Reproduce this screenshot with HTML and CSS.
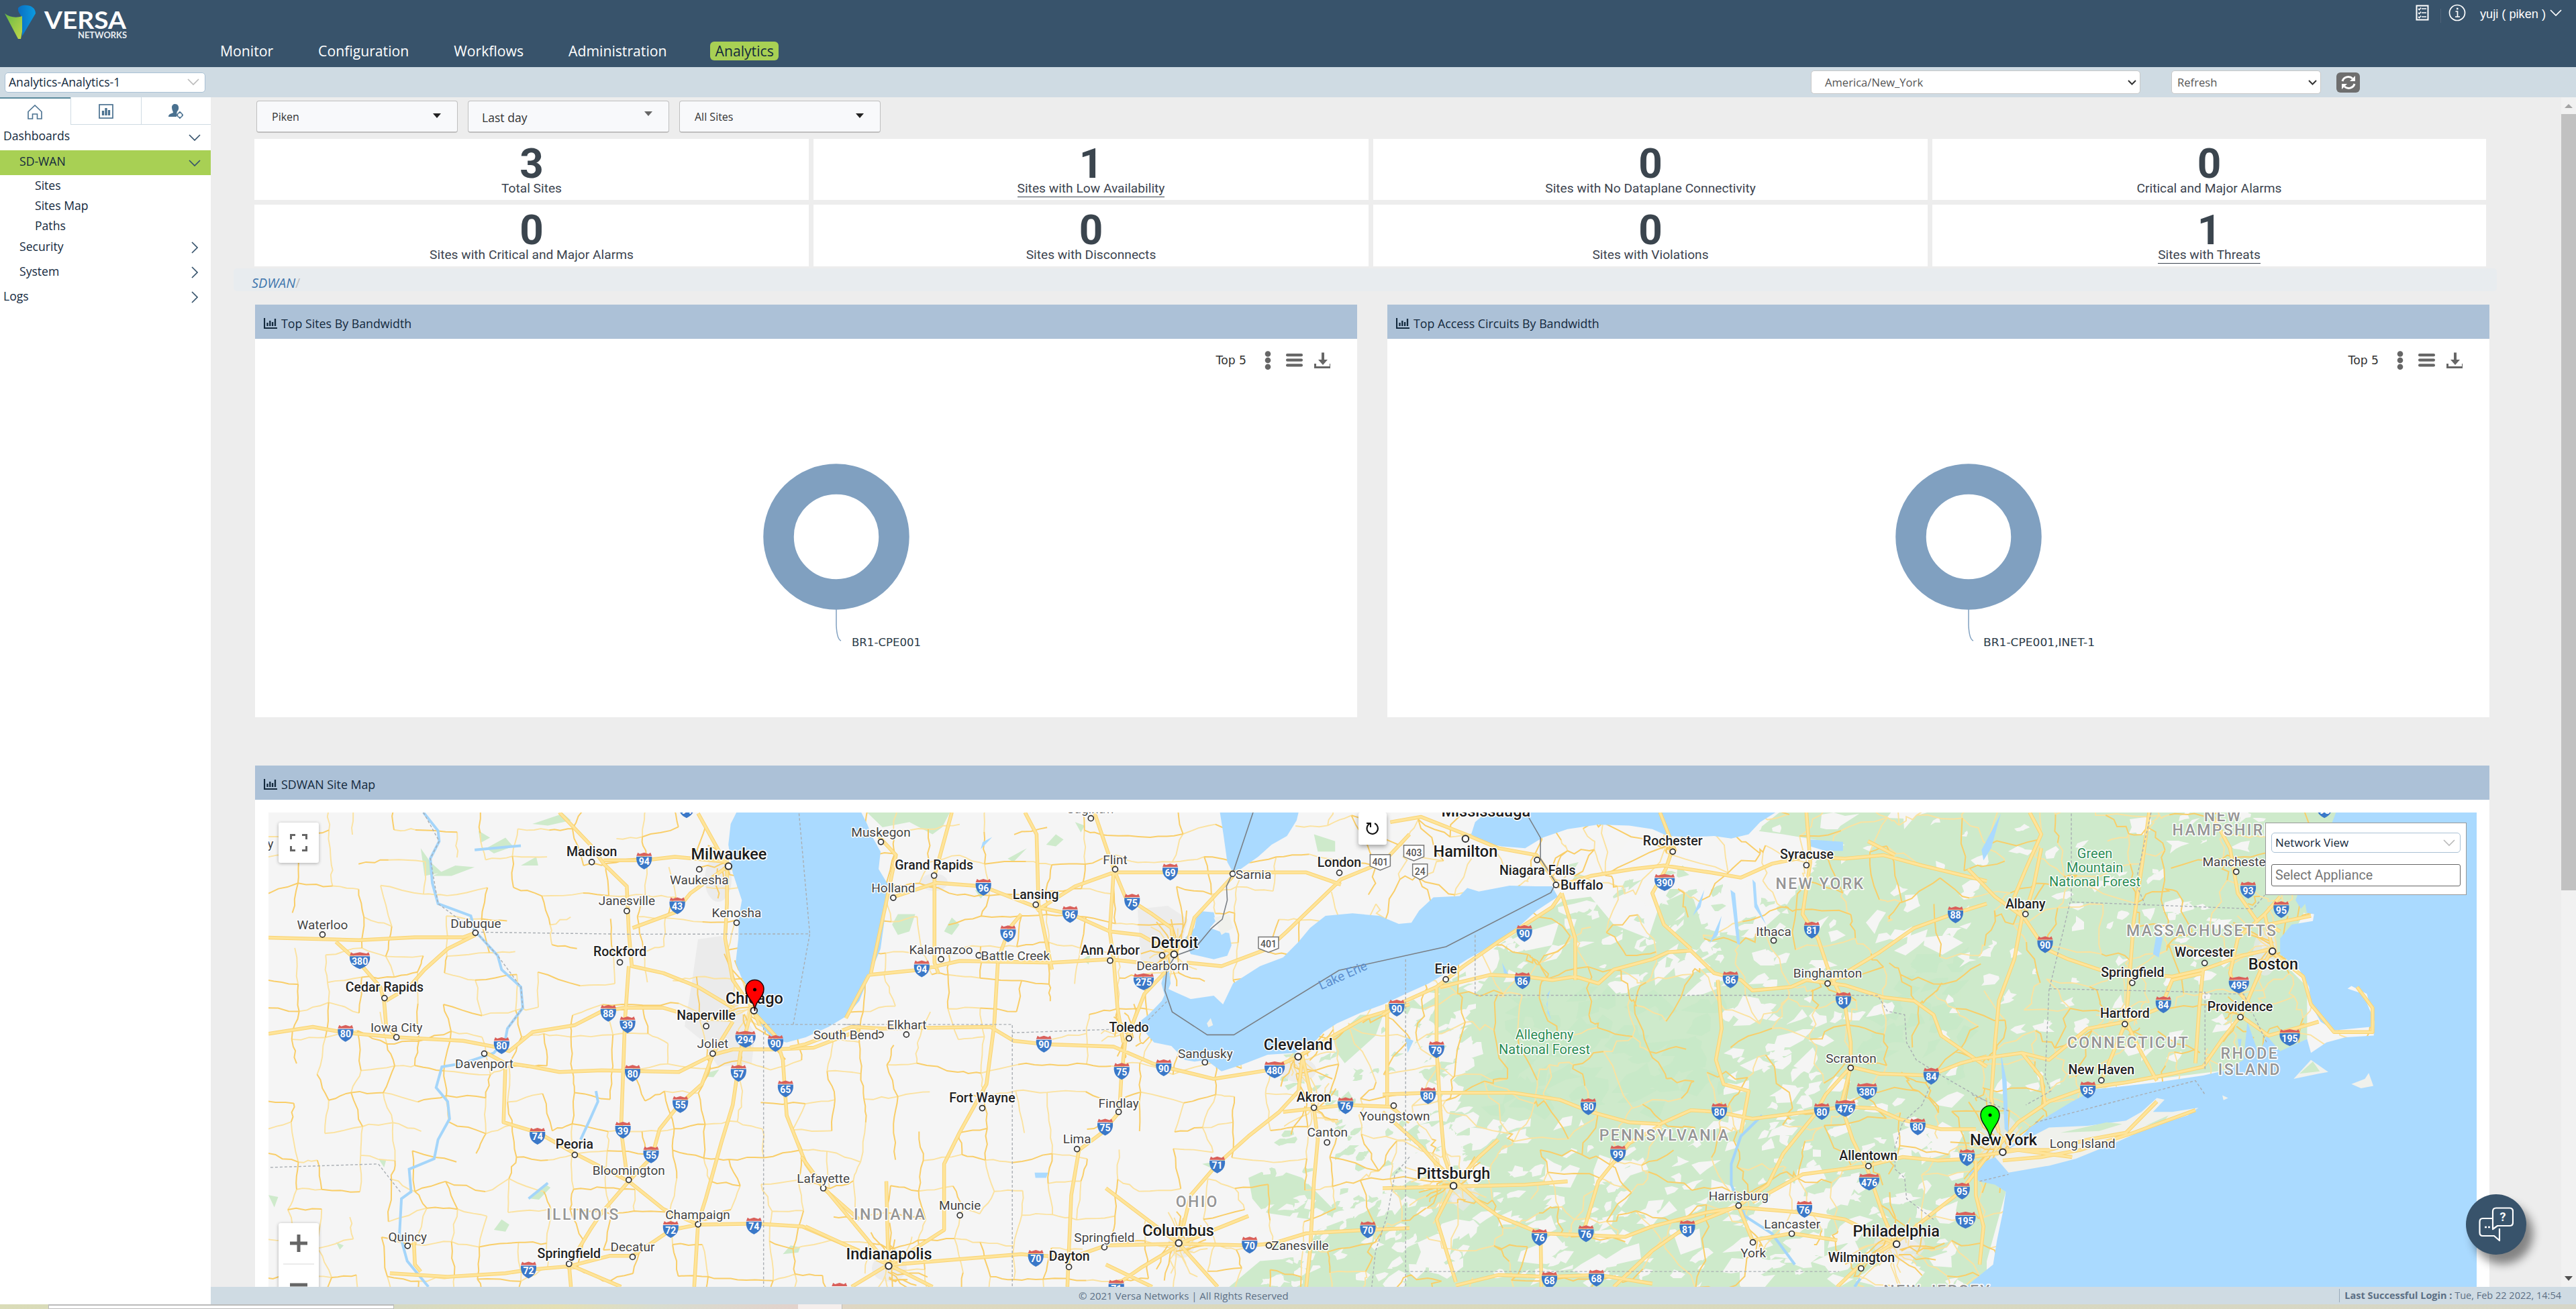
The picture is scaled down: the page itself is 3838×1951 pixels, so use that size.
FILE: index.html
```html
<!DOCTYPE html>
<html lang="en">
<head>
<meta charset="utf-8">
<title>Versa Analytics</title>
<link rel="stylesheet" href="styles.css">
</head>
<body>
<svg width="0" height="0" class="defs">
  <symbol id="chev" viewBox="0 0 18 10"><path d="M1 1 L9 9 L17 1" fill="none" stroke="currentColor" stroke-width="1.7"/></symbol>
  <symbol id="tri" viewBox="0 0 12 7"><path d="M0 0H12L6 7Z" fill="currentColor"/></symbol>
  <symbol id="bars" viewBox="0 0 20 16"><path d="M1 0V15H20" fill="none" stroke="currentColor" stroke-width="2.2"/><path d="M5.5 7V12M9.3 4V12M13.1 6V12M17 1V12" stroke="currentColor" stroke-width="2.3"/></symbol>
  <symbol id="tools" viewBox="0 0 98 28">
    <g fill="#666"><circle cx="5" cy="4.5" r="4.3"/><circle cx="5" cy="14" r="4.3"/><circle cx="5" cy="23.8" r="4.3"/>
    <rect x="32" y="4" width="25" height="4.2" rx="2"/><rect x="32" y="11.6" width="25" height="4.2" rx="2"/><rect x="32" y="19.2" width="25" height="4.2" rx="2"/>
    <path d="M85 2.5h4V13h5l-7 8-7-8h5zM74 19h3v4h20v-4h3v7H74z"/></g>
  </symbol>
</svg>
<header class="top">
  <svg class="logo" viewBox="0 0 190 52">
    <defs><linearGradient id="lg" x1="0" y1="0" x2="1" y2="1"><stop offset="0" stop-color="#66b845"/><stop offset="1" stop-color="#c0d84a"/></linearGradient>
    <linearGradient id="lb" x1="0" y1="0" x2="1" y2="0"><stop offset="0" stop-color="#0a6fc2"/><stop offset="1" stop-color="#0b9be0"/></linearGradient></defs>
    <path d="M27 5C32-2 53-1 53 13L33 47V24C33 14 26 13 27 5Z" fill="url(#lb)"/>
    <path d="M7 13C14 19 25 20 33 17V40L31 51H27Z" fill="url(#lg)"/>
    <text x="66" y="36" class="lg1" textLength="122" lengthAdjust="spacingAndGlyphs">VERSA</text>
    <text x="116" y="49.5" class="lg2" textLength="73" lengthAdjust="spacingAndGlyphs">NETWORKS</text>
  </svg>
  <nav class="nav"><a>Monitor</a><a>Configuration</a><a>Workflows</a><a>Administration</a><a class="on">Analytics</a></nav>
  <div class="user">
    <svg width="20" height="24" viewBox="0 0 20 24"><rect x="1.5" y="1.5" width="17" height="21" fill="none" stroke="#fff" stroke-width="2"/><path d="M9 6h7M9 12h7M9 18h7M4 6l1.5 1.5L8 4.5M4 12l1.5 1.5L8 10.500M4 18l1.5 1.500L8 16.500" fill="none" stroke="#fff" stroke-width="1.6"/></svg>
    <i class="sep"></i>
    <svg width="26" height="26" viewBox="0 0 26 26" fill="none" stroke="#fff" stroke-width="1.7"><circle cx="13" cy="13" r="11.500"/><path d="M10.500 11h3v8M10 19h7"/><path d="M12 7h2.500" stroke-width="2.500"/></svg>
    <span>yuji ( piken )</span><svg width="18" height="10"><use href="#chev"/></svg>
  </div>
</header>
<div class="sub">
  <div class="sel node"><span>Analytics-Analytics-1</span><svg width="18" height="10"><use href="#chev"/></svg></div>
  <div class="sel tz"><span>America/New_York</span><svg width="13" height="8" viewBox="0 0 13 8"><path d="M1 1l5.500 5.500L12 1" fill="none" stroke="#333" stroke-width="2"/></svg></div>
  <div class="sel rf"><span>Refresh</span><svg width="13" height="8" viewBox="0 0 13 8"><path d="M1 1l5.500 5.500L12 1" fill="none" stroke="#333" stroke-width="2"/></svg></div>
  <div class="reload"><svg width="22" height="22" viewBox="0 0 22 22"><path d="M2 9A9 8.500 0 0 1 17 5M20 13A9 8.500 0 0 1 5 17" fill="none" stroke="#fff" stroke-width="3"/><path d="M21 1V9H13ZM1 21V13H9Z" fill="#fff"/></svg></div>
</div>
<div class="work">
  <aside>
    <div class="tabs">
      <div class="tab on"><svg width="22" height="22" viewBox="0 0 22 22" fill="none" stroke="#4a7190" stroke-width="1.600"><path d="M1 10.500L11 1 21 10.500V21H14.500V14H7.500V21H1Z"/></svg></div>
      <div class="tab"><svg width="22" height="22" viewBox="0 0 22 22" stroke="#4a7190" fill="none"><rect x="1" y="1" width="20" height="20" stroke-width="1.700"/><path d="M6.500 10v7M11 6v11M15.500 9v8" stroke-width="3.300"/></svg></div>
      <div class="tab"><svg width="22" height="22" viewBox="0 0 22 22"><path d="M10 0C16 0 16.500 8 13 11C12 13 13 13.500 12 19H0C0 15 4 14.500 7 13C7 11 5 9 5 5C5 2 7 0 10 0Z" fill="#4a7190"/><circle cx="17" cy="16.500" r="3.600" fill="#fff" stroke="#4a7190" stroke-width="1.600"/><path d="M17 11v2M17 20v2M11.500 16.500h2M20.500 16.500h2" stroke="#4a7190" stroke-width="1.800"/></svg></div>
    </div>
    <div class="row r0"><span>Dashboards</span><svg width="18" height="10"><use href="#chev"/></svg></div>
    <div class="row r1 on"><span>SD-WAN</span><svg width="18" height="10"><use href="#chev"/></svg></div>
    <div class="row r2">Sites</div><div class="row r2">Sites Map</div><div class="row r2">Paths</div>
    <div class="row r1"><span>Security</span><svg class="rt" width="18" height="10"><use href="#chev"/></svg></div>
    <div class="row r1"><span>System</span><svg class="rt" width="18" height="10"><use href="#chev"/></svg></div>
    <div class="row r0"><span>Logs</span><svg class="rt" width="18" height="10"><use href="#chev"/></svg></div>
  </aside>
  <div class="right">
    <div class="view">
      <main>
        <div class="filters">
          <div class="f"><span>Piken</span><svg width="12" height="7"><use href="#tri"/></svg></div>
          <div class="f mid"><span>Last day</span><svg width="12" height="7"><use href="#tri"/></svg></div>
          <div class="f"><span>All Sites</span><svg width="12" height="7"><use href="#tri"/></svg></div>
        </div>
        <div class="cards">
          <div class="card"><b>3</b><span>Total Sites</span></div>
          <div class="card"><b>1</b><span class="u">Sites with Low Availability</span></div>
          <div class="card"><b>0</b><span>Sites with No Dataplane Connectivity</span></div>
          <div class="card"><b>0</b><span>Critical and Major Alarms</span></div>
          <div class="card"><b>0</b><span>Sites with Critical and Major Alarms</span></div>
          <div class="card"><b>0</b><span>Sites with Disconnects</span></div>
          <div class="card"><b>0</b><span>Sites with Violations</span></div>
          <div class="card"><b>1</b><span class="u">Sites with Threats</span></div>
        </div>
        <div class="crumb"><em>SDWAN</em>/</div>
        <div class="panels">
          <section class="panel"><h2><svg width="20" height="16"><use href="#bars"/></svg>Top Sites By Bandwidth</h2>
            <div class="chart"><div class="tb"><span>Top 5</span><svg width="102" height="28" viewBox="0 0 102 28"><use href="#tools" width="98" height="28"/></svg></div>
            <svg class="donut" viewBox="0 0 1642 400"><circle cx="866" cy="130" r="86" fill="none" stroke="#80a0c0" stroke-width="45.500"/><path d="M866 238V262Q867 283 873 285" fill="none" stroke="#80a0c0" stroke-width="1.500"/><text x="889" y="293" textLength="103" lengthAdjust="spacingAndGlyphs">BR1-CPE001</text></svg></div>
          </section>
          <section class="panel"><h2><svg width="20" height="16"><use href="#bars"/></svg>Top Access Circuits By Bandwidth</h2>
            <div class="chart"><div class="tb"><span>Top 5</span><svg width="102" height="28" viewBox="0 0 102 28"><use href="#tools" width="98" height="28"/></svg></div>
            <svg class="donut" viewBox="0 0 1642 400"><circle cx="866" cy="130" r="86" fill="none" stroke="#80a0c0" stroke-width="45.500"/><path d="M866 238V262Q867 283 873 285" fill="none" stroke="#80a0c0" stroke-width="1.500"/><text x="888" y="293" textLength="166" lengthAdjust="spacingAndGlyphs">BR1-CPE001,INET-1</text></svg></div>
          </section>
        </div>
        <section class="panel mapp"><h2><svg width="20" height="16"><use href="#bars"/></svg>SDWAN Site Map</h2>
          <div class="map">
            <svg id="map" width="3290" height="707" viewBox="400 1211 3290 707">
              <g id="green" class="green">
                <g transform="translate(380 1140) scale(.57398 .51722)"><path d="M720 170L800 140 820 160 760 175ZM580 190l30 20-25 15zM600 240l50-30 20 25-50 20zM430 240l25 40 30 30-45 10zM460 320l60-30 50 5-60 25zM690 290l40-25 5 25zM1165 890l40-12-15 22-25-2zM1370 1410l20-25 25 5-5 15zM620 1340l20-30 20 15-10 20zM715 1250l40-40 12 8-30 35zM320 1135l20 5-5 20zM210 1375l20 10-10 12zM35 1240l25 5-10 30z"/></g>
                <g transform="translate(1200 1140) scale(.57398 .51722)"><path d="M160 137H375L355 180 330 200 270 165 200 180ZM625 230l25-30 20 15-20 20zM240 430l45 0-15 50-30 10-15-30zM360 480l20-40 20 20-20 30zM440 360l30 5-15 20zM720 560l20-15-5 30zM525 270l50-30-35 40zM700 165l25 10-10 20zM1320 200l55 20 0 30-45 0zM1370 790L1440 720 1500 720 1480 780 1400 860 1380 830ZM1380 970l30-30 15 30-40 30zM1568 1130V1504H1100L1180 1430 1290 1420 1330 1340 1450 1290 1530 1230 1520 1180ZM1150 1190l60-30 80 30 80 90-60 30-120-20-30-40zM1030 1150l50-10-10 30z"/></g>
                <g transform="translate(2060 1140) scale(.57398 .51722)"><path d="M40 700L210 600 300 520 470 390 540 380 600 460 690 500 720 400 800 360 830 470 900 490 960 500 1040 420 1090 330 1130 270 1200 230 1040 200 970 190 1030 137H1568V1504H0V1230L60 1200 90 1130 60 1060 120 1010 160 930 90 900 110 830 50 800 90 740Z"/></g>
                <g transform="translate(2938 1140) scale(.57398 .51722)"><path d="M-30 137H950L900 280 860 430 800 560 870 640 870 790 800 830 660 880 480 905 320 935 130 1060 60 1130 60 1200 88 1230 20 1504H-30Z"/></g>
              </g>
              <g id="specks"></g>
              <g class="urban">
                <path d="M1040 1400L1075 1395 1090 1440 1100 1500 1125 1540 1120 1585 1070 1590 1045 1550 1020 1530 1030 1470Z"/><ellipse cx="1070" cy="1310" rx="20" ry="34"/><path d="M1695 1355L1740 1350 1770 1370 1760 1410 1735 1450 1700 1440Z"/><ellipse cx="1325" cy="1890" rx="26" ry="20"/><ellipse cx="1760" cy="1855" rx="20" ry="20"/><ellipse cx="1935" cy="1595" rx="26" ry="18"/><path d="M2150 1765L2180 1760 2205 1780 2180 1805 2160 1790Z"/><ellipse cx="2830" cy="1855" rx="38" ry="25"/><ellipse cx="2980" cy="1700" rx="30" ry="40"/><ellipse cx="3375" cy="1420" rx="18" ry="34"/><ellipse cx="1392" cy="1315" rx="20" ry="13"/>
              </g>
              <g id="minor"></g>
              <g class="water">
                <g transform="translate(1200 1140) scale(.57398 .51722)">
                  <path d="M-179 137L-194 170-200 230-189 310-165 390-173 440-174 500-181 570-167 610-139 660-129 720-109 760-84 790-49 800 1 785 60 755 105 725 140 680 165 610 195 530 205 450 205 400 217 350 190 300 195 250 175 210 160 170 145 137Z"/>
                  <path d="M1076 137L1085 200 1095 280 1110 310 1130 300 1175 265 1210 230 1250 205 1275 160 1280 137Z"/>
                  <path d="M1015 440L1030 422 1060 425 1065 450 1050 470 1075 480 1100 485 1106 520 1095 550 1060 560 1000 545 985 500 1010 470ZM940 560l8 70-14 40-10-40z"/>
                  <path d="M940 645L925 680 890 720 862 745 905 800 950 810 985 850 1010 855 1040 850 1080 883 1130 865 1200 835 1270 830 1320 800 1345 770 1380 745 1440 715 1500 690 1558 660 1618 630 1663 600 1718 560 1798 510 1848 470 1898 420 1953 380 1938 350 1898 350 1828 348 1748 365 1718 355 1698 378 1630 382 1593 420 1573 455 1540 458 1490 435 1420 428 1350 435 1310 470 1280 510 1240 555 1180 580 1110 630 1084 690 1060 665 1000 675 960 655Z"/>
                  <path d="M595 1175h35l-5 15h-28zM485 208l-30 35 5-20z"/>
                </g>
                <g transform="translate(2060 1140) scale(.57398 .51722)">
                  <path d="M270 137L240 165 230 200 260 225 310 235 370 240 415 210 480 185 560 172 640 175 700 185 740 205 800 208 860 205 905 212 950 200 980 165 1020 137Z"/>
                  <path d="M1110 215L1195 222 1195 248 1150 248 1110 235ZM903 360L915 370 928 520 920 515ZM960 330L968 340 972 400 995 460 965 410ZM835 360L825 410 805 435ZM880 435L870 490 848 515ZM435 648L425 690 438 735 428 715 428 660ZM310 570l20 40-15-10zM60 785l20 10-15 35z"/>
                </g>
                <g transform="translate(2938 1140) scale(.57398 .51722)">
                  <path d="M945 137L930 180 890 240 860 330 840 390 860 425 888 430 885 450 830 460 800 500 800 545 850 590 875 640 880 690 905 740 940 765 1035 755 1038 720 1015 660 975 645 985 637 1025 660 1045 740 1043 780 970 785 920 800 880 830 870 790 850 800 800 825 765 780 745 835 715 740 705 850 660 880 600 895 540 905 480 915 400 925 320 935 260 970 200 1010 150 1045 130 1070 100 1100 60 1130 20 1150-10 1180 20 1200 60 1210 88 1230 80 1290 65 1370 55 1440 10 1480-20 1510H1330V137Z"/>
                  <path d="M75 140L50 240 30 275 25 245ZM480 480l15 20-10 55-15-10zM75 830l15 80 5 150-10-10zM690 790l10 0-5 40z"/>
                </g>
              </g>
              <g class="land"><g transform="translate(2938 1140) scale(.57398 .51722)"><path d="M95 1175L60 1130 130 1085 200 1045 300 1040 400 1025 440 1000 480 960 500 965 470 1000 520 1000 588 988 560 1010 460 1045 380 1085 270 1135 200 1155ZM985 920L1020 905 1030 888 1042 925 1010 932ZM835 905L880 850 925 885 900 890ZM650 952l15 8-12 6z"/><path class="g2" d="M450 1040L510 1010 500 1025ZM230 1060l120-30 40 5-60 20zM850 890l35-35 18 28zM850 420l15-20 5 30z"/></g>
              <g transform="translate(1200 1140) scale(.57398 .51722)"><path d="M1042 745l10-15 6 20-12 6zM1060 440l40-10 10 40-30 20z"/></g></g>
              <g class="river"><g transform="translate(380 1140) scale(.57398 .51722)">
                <path d="M437 137L475 190 478 220 455 270 460 340 475 400 560 435 572 480 630 550 640 590 690 640 695 700 655 760 650 790 620 830 540 860 485 870 470 930 500 970 505 1020 475 1080 465 1135 400 1165 405 1230 380 1250 375 1350 395 1430 450 1504M885 940l5 30-20 50-25 60M710 1250l50-45M570 245l120-12"/></g>
                <g transform="translate(2060 1140) scale(.57398 .51722)"><path d="M985 1010L930 1070 905 1150 905 1210 940 1300 1010 1350 1070 1440M1240 1480l-15 24"/></g>
              </g>
              <g id="major" class="major">
                <g transform="translate(380 1140) scale(.57398 .51722)"><path d="M35 498L270 505 415 497 540 497 572 484M35 775L150 755 235 772 367 785 540 795 620 812 660 825 720 770 830 750 900 710 960 700 1060 700 1150 730 1240 735M660 860L720 870 790 885 900 880 1100 885 1190 835 1240 820 1350 820 1450 815 1568 765M210 510L270 570 325 640 335 680 340 750 367 785M790 137L870 230 905 285 965 350 970 480 978 580 1060 600 1150 640 1240 700M905 275L1010 275 1090 265 1230 280M1230 290L1130 370 1090 425 980 470M970 580L960 740 955 900 950 1050 965 1180M1240 740L1190 830 1160 920 1100 980 1050 1050 1030 1130 970 1200 900 1290 870 1340 815 1440 820 1504M1290 700L1260 830 1240 980 1210 1090 1170 1250 1150 1320 1140 1504M1300 720L1350 780 1370 850 1380 1010 1430 1150 1475 1220 1568 1310M600 830L650 860 645 1030 735 1060 830 1120 970 1200 1060 1280 1150 1325 1300 1322 1420 1330 1568 1400M350 1465L500 1475 650 1465 710 1455 815 1445 920 1415 980 1415 1080 1340 1150 1325M1150 140L1225 290 1225 400 1220 500 1240 620 1290 700 1310 750M572 490L500 530 440 590 400 640 340 680M815 1440L950 1504M412 1370L415 1440 430 1460"/></g>
                <g transform="translate(1200 1140) scale(.57398 .51722)"><path d="M-40 815L0 805 120 755 200 760 480 755 540 795 620 805 800 812 900 860 930 870 1060 905 1200 880 1280 840 1340 800 1450 730 1568 690M230 380L340 340 460 350 600 410 690 430 790 480 870 490 950 540M560 430L530 470 500 560 490 750 470 920 400 1060 360 1150 360 1340 220 1440M600 420L700 350 800 310 950 310 1110 310M750 137L800 300 830 380 900 430 950 470 957 545M940 590L880 660 830 800 820 900 815 1000 770 1060 710 1110 690 1240 680 1504M165 605L300 590 400 565 640 570 790 560 950 580M800 310L790 480 800 560 810 700 825 800M990 570L1080 580 1200 530 1250 480 1390 330 1500 280 1568 200M1110 310L1300 310 1390 345M380 137L335 320 335 570 345 600M570 137L600 200 605 400 640 590M215 1440L50 1220-10 1130M215 1440L0 1330M230 1440L560 1410 690 1420 780 1385 970 1380 1150 1385 1210 1380 1300 1350 1460 1340 1568 1335M970 1380L1000 1240 1070 1150 1150 1070 1230 1000 1280 940 1290 840 1320 990 1330 1080 1320 1200 1310 1400 1300 1504M960 1390L870 1450 800 1504M1240 1000L1400 980 1520 985 1568 1030M215 1440L210 1200M215 1440L120 1504M215 1440L330 1504M970 1380L1070 1504M970 1380L780 1220M970 1380L1150 1300M165 605L105 730M185 200L235 260 205 420 170 600M1110 320L1010 440 990 520M780 1440L900 1504M1510 690L1510 980"/></g>
                <g transform="translate(2060 1140) scale(.57398 .51722)"><path d="M20 165L100 150 215 200 300 240 400 260 450 340M455 350L540 320 650 300 730 290 850 310 930 325 1010 285 1100 265 1200 270 1300 260 1400 290 1568 335M465 370L440 410 300 510 210 580 140 640 60 680 0 720M150 640L280 605 370 610 440 620 500 610 560 630 600 590 700 560 740 540 800 535 860 600 930 620 960 650 1060 640 1100 620 1200 635 1300 670 1380 680 1430 720 1450 780 1568 870M750 250L735 300 700 370 730 460 800 530M1100 137L1110 280 1090 430 1130 500 1160 600 1200 690 1215 800 1215 870 1150 950 1120 1010 1040 1120 1000 1210 925 1270 790 1330 700 1400 600 1504M1170 620L1290 540 1380 470 1480 430 1568 400M140 640L140 820 150 1000 160 1130 185 1210 140 1310 190 1490M0 950L120 945 340 945 460 965 540 1000 640 1030 720 1035 800 995 870 1000 960 1020 1100 1000 1200 985 1280 990 1340 1020 1450 1050 1540 1050M870 620L880 760 865 850 885 920 950 940 930 1060M0 1000L100 1100 140 1150 250 1260 300 1300 410 1350 520 1355 630 1360 700 1330 840 1290 925 1275 1090 1290 1200 1310 1330 1380M1215 870L1190 980 1220 1080 1260 1170 1300 1300 1330 1380M960 1260L1090 1180 1260 1155 1350 1130 1440 1140 1530 1135M1215 870L1290 890 1420 895 1500 860 1568 840M1180 1504L1250 1430 1340 1370 1430 1290 1500 1230 1568 1130M520 1350L560 1200 640 1090 720 1040M190 1500L300 1470 430 1475 560 1470 700 1495M465 370L500 500 500 620M0 1220L185 1215 370 1210 480 1200M185 1210L250 1130 300 1080M925 1275L960 1370 1062 1350 1180 1370M410 1350L412 1504M720 137L760 250M1260 220L1330 260"/></g>
                <g transform="translate(2938 1140) scale(.57398 .51722)"><path d="M150 137L180 200 140 300 110 380 130 440 110 560 70 680 60 800 50 960 70 1060M-10 300L60 380 135 440 190 530 250 560 330 590 415 600 520 610 600 590 700 550 780 530M460 137L440 300 420 450 410 600 400 740 340 900M0 850L130 830 200 850 300 760 400 740 490 700 520 620 600 600M60 1110L120 1030 200 970 300 930 400 915 520 890 600 870 650 790 700 720 750 590 780 530 760 430 800 380M730 700L680 640 670 600 690 500 760 430M620 137L670 240 690 370 740 450M780 540L860 610 880 690 940 770 1040 770 1040 700 1000 640M700 725L770 780 870 750 900 740M80 1110L200 1110 300 1080 400 1060 480 970M80 1140L180 1130 280 1110 420 1060 580 995M10 1140L10 1240 30 1330 20 1440M135 440L160 350 180 240M600 590L590 700 580 860M400 740L440 830 480 910M130 830L180 900 190 980M0 1130L120 1110 260 1130M800 480L770 460 880 435"/></g>
              </g>
              <g class="dash"><g transform="translate(380 1140) scale(.57398 .51722)"><path d="M575 482L970 488 1440 487 1397 748M1412 140L1440 487M1568 748H1320V1504M40 1160L320 1150 380 1235M437 137L478 220 455 270 475 400 572 480 630 550 690 640 695 700 655 760"/></g>
                <g transform="translate(1200 1140) scale(.57398 .51722)"><path d="M100 748H537V1504M537 772L800 762M890 735L940 680M1558 560V1504M1568 1130L1530 1180 1510 1300 1480 1400 1470 1504"/></g>
                <g transform="translate(2060 1140) scale(.57398 .51722)"><path d="M240 490V664H1285L1310 710 1355 720 1360 800 1385 850 1450 895 1568 970M60 1460H1185M1435 890L1400 980 1350 1030 1330 1100 1330 1165 1355 1190 1360 1250 1430 1310"/></g>
                <g transform="translate(2938 1140) scale(.57398 .51722)"><path d="M258 140V395L730 415 760 375M465 137L425 340 450 405M255 395L200 650 190 900 205 940 140 980M200 645L605 655V880M605 660H705L765 800M165 1030L580 910 605 950M0 950L100 1000M20 1200L95 1180"/></g></g>
              <g class="border"><g transform="translate(1200 1140) scale(.57398 .51722)"><path d="M1162 137L1110 310 1093 350 1095 390 1082 445 1055 470 1010 530 960 550 938 590 933 650 952 712 1043 778H1112L1385 592 1663 524 1935 368 1948 340 1908 270V210L1870 137"/></g></g>
              <g id="labels"></g>
              <path d="M1124.500 1507C1124 1490 1111 1488 1111 1474A13.500 13.500 0 0 1 1138 1474C1138 1488 1125 1490 1124.500 1507Z" fill="#f00" stroke="#200" stroke-width="1.500"/><circle cx="1124.500" cy="1475" r="2.500"/>
              <path d="M2965 1697C2964 1680 2951 1676 2951 1662A14 14 0 0 1 2979 1662C2979 1676 2966 1680 2965 1697Z" fill="#0f0" stroke="#020" stroke-width="1.500"/><circle cx="2965" cy="1662" r="2.500"/>
            </svg>
            <div class="ctl full"><svg width="26" height="26" viewBox="0 0 26 26"><path d="M1.500 8V1.500H8M18 1.500h6.500V8M24.500 18v6.500H18M8 24.500H1.500V18" fill="none" stroke="#666" stroke-width="3"/></svg></div>
            <div class="ctl zoom"><svg width="60" height="95" viewBox="0 0 60 95"><path d="M17 30H43M30 17V43M17 92H43" stroke="#666" stroke-width="5"/><path d="M7 61H53" stroke="#e6e6e6" stroke-width="1.500"/></svg></div>
            <div class="ctl rot"><svg width="22" height="22" viewBox="0 0 22 22"><path d="M2 3h6v6M8 3A8.200 8.200 0 1 0 14 3.200" fill="none" stroke="#111" stroke-width="2"/></svg></div>
            <div class="pick"><div class="sel"><span>Network View</span><svg width="18" height="10"><use href="#chev"/></svg></div><div class="inp">Select Appliance</div></div>
          </div>
        </section>
      </main>
      <div class="scroll"><svg width="22" height="25"><path d="M11 10L17 16H5Z" fill="#a3a3a3"/></svg><i></i><svg class="dn" width="22" height="25"><path d="M5 9H17L11 16Z" fill="#505050"/></svg></div>
    </div>
    <footer><span class="c">© 2021 Versa Networks | All Rights Reserved</span><span class="l"><b>Last Successful Login :</b> Tue, Feb 22 2022, 14:54</span></footer>
  </div>
</div>
<div class="desk"><i class="win"></i><i class="win2"></i></div>
<div class="chat"><svg width="52" height="52" viewBox="0 0 52 52" fill="none" stroke="#fff" stroke-width="2.200" stroke-linejoin="round"><path d="M26 1.500H46Q51 1.500 51 6.500V23Q51 28 46 28H28L21 33V6.500Q21 1.500 26 1.500Z"/><path d="M21 17H6Q1.500 17 1.500 22V38Q1.500 43 6 43H23L31 50V32"/><path d="M9 30h3M14 30h3" stroke-width="2.600"/><text x="36" y="21" class="q">?</text></svg></div>
<script src="map.js"></script>
</body>
</html>
```
FILE: styles.css
```css
*{box-sizing:border-box}
body{margin:0;width:3838px;height:1951px;overflow:hidden;font:17.6px/24px "Open Sans","Noto Sans",sans-serif;color:#13293d;background:#ededed;display:flex;flex-direction:column;position:relative}
svg{flex:none;display:block}
.defs{position:absolute}
.top{height:100px;background:#38536b;color:#fff;display:flex;flex:none}
.logo{width:190px;height:52px;margin-top:7px;flex:none}
.lg1{font:bold 36px Lato,sans-serif;fill:#fff}
.lg2{font:bold 12.500px Lato,sans-serif;fill:#e8edf1}
.nav{display:flex;align-items:flex-start;margin:62px 0 0 138px;font-size:21.200px;line-height:28px}
.nav a{margin-right:67px;white-space:nowrap}
.nav a.on{background:#a8d054;color:#13293d;border-radius:6px;padding:0 7px;margin-left:-2px}
.user{margin-left:auto;margin-right:21px;height:38px;display:flex;align-items:center;font:18.200px "Liberation Sans",sans-serif}
.user .sep{width:1px;height:21px;background:#4f6379;margin:8px 11px 0 17px}
.user span{margin:5px 6px 0 21px;white-space:nowrap}
.sub{height:45px;background:#cfdbe3;display:flex;align-items:center;flex:none}
.sel{background:#fff;border:1px solid #a9c1d5;border-radius:5px;display:flex;align-items:center;justify-content:space-between}
.node{width:299px;height:30px;margin-left:7px;padding:0 8px 1px 5px}
.node svg,.pick svg{color:#bbb}
.tz{width:491px;height:35px;margin-left:2392px;padding:0 5px 0 20px}
.tz,.rf{border-color:#c8c8c8;font-size:16.600px;color:#555}
.rf{width:223px;height:35px;margin-left:46px;padding:0 5px 0 8px}
.reload{width:35px;height:30px;background:#6e6e6e;border-radius:6px;margin-left:23px;display:grid;place-items:center}
.work{display:flex;height:1799px;flex:none}
aside{width:314px;background:#fff;flex:none}
.tabs{display:flex;height:41px}
.tab{flex:1;display:grid;place-items:center;border-left:1px solid #cfdbe3;border-bottom:1px solid #cfdbe3;padding-top:2px}
.tab.on{border:0;border-top:2px solid #5a8a9c;padding:0 2px 0 0}
.row{height:37px;display:flex;justify-content:space-between;align-items:center;padding:0 15px 5px 29px}
.row.r0{padding-left:5px}
.row.r0:nth-child(2){height:38px;padding-bottom:6px}
.row svg{margin-top:6px;color:#36536c}
.row svg.rt{transform:rotate(-90deg);margin-top:3px}
.row.on{background:#a8d054}
.row.r2{height:30px;padding-left:52px;padding-bottom:0}
.row.rt{padding-bottom:6px}
.right{flex:1;display:flex;flex-direction:column}
.view{height:1773px;display:flex;overflow:hidden}
main{width:3502px;height:1773px;overflow:hidden;padding:5px 0 0 65px;position:relative}
.filters{display:flex;gap:15px;padding-left:3px}
.f{width:300px;height:48px;background:#f8f9fb;border:1px solid #bfbfbf;border-bottom-width:2px;border-radius:4px;display:flex;justify-content:space-between;align-items:center;padding:0 24px 0 22px;font-size:16px;color:#333}
.f svg{margin-bottom:2px;color:#222}
.mid{padding-left:20px;font-size:17.600px;padding-top:2px}
.mid svg{margin-bottom:10px;color:#666}
.cards{display:grid;grid-template-columns:826px 827px 826px 825px;grid-template-rows:91px 92px;gap:7px;margin-top:9px}
.card{background:#fff;display:flex;flex-direction:column;align-items:center;font:19.200px/22px Roboto,sans-serif;color:#3c444f;padding-left:0}
.card b{font-size:62px;line-height:62px;margin-top:6px;color:#3b454e;font-weight:700}
.card:nth-child(n+5) b{margin-top:7px}
.card span{margin-top:-5px;height:24px}
.card .u{border-bottom:1.500px solid #3c444f}
.crumb{margin:3px 0 20px -31px;width:3372px;height:34px;background:#e8ecef;border-radius:5px;padding:10px 0 0 27px;font-size:19.800px;color:#bbb}
.crumb em{color:#3f76ad}
.panels{display:grid;grid-template-columns:1642px 1642px;gap:45px;padding-left:1px;width:3330px}
.panel{height:615px;background:#fff}
.panel h2{margin:0;height:51px;background:#acc1d7;font-weight:400;font-size:17.800px;display:flex;align-items:center;padding:5px 0 0 13px;gap:6px}
.tb{display:flex;justify-content:flex-end;align-items:center;padding:18px 36px 0 0;font:17.200px "DejaVu Sans",sans-serif;color:#333;height:46px;gap:27px}
.donut{width:1642px;height:400px;margin-top:119px;overflow:visible}
.donut text{font:16px "DejaVu Sans",sans-serif;fill:#2a3a48}
.mapp{margin:72px 0 0 1px;width:3329px;height:777px}
.map{margin:19px 0 0 20px;width:3290px;height:707px;position:relative;overflow:hidden;background:#f5f5f5}
.green{fill:#ceeacb}
.urban{fill:#e8e8e8;opacity:.7}
.water{fill:#aadaff}
.land{fill:#f0f1ec}
.g2{fill:#ceeacb}
.river path{fill:none;stroke:#a4d5fa;stroke-width:4;vector-effect:non-scaling-stroke}
.major path{fill:none;stroke:#fad370;stroke-width:5.500;stroke-linejoin:round;vector-effect:non-scaling-stroke}
.major path.in{stroke:#fee49a;stroke-width:3.600}
.dash path{fill:none;stroke:#a9aeb3;stroke-width:1.400;stroke-dasharray:4 3;vector-effect:non-scaling-stroke}
.border path{fill:none;stroke:#7a7f85;stroke-width:1.600;vector-effect:non-scaling-stroke}
#labels text{font-family:Roboto,sans-serif;text-anchor:middle;dominant-baseline:central;paint-order:stroke;stroke:#fff;stroke-width:3px;stroke-linejoin:round}
#labels .s{font-size:19px;fill:#444}
#labels .m{font-size:19.500px;font-weight:500;fill:#222}
#labels .b{font-size:23.500px;font-weight:500;fill:#1c1c1c}
#labels .st{font-size:23px;font-weight:500;fill:#959595;letter-spacing:2.400px}
#labels .pk{font-size:20px;fill:#2c8c55}
#labels .lk{font-size:19px;fill:#5d8fce;stroke:none}
#labels .n{font-size:14px;font-weight:700;fill:#fff;stroke:none}
#labels .n2{font-size:14px;font-weight:500;fill:#555;stroke:none}
.ctl{position:absolute;background:#fff;border-radius:3px;box-shadow:0 1px 5px rgba(0,0,0,.3)}
.full{left:15px;top:15px;width:60px;height:60px;display:grid;place-items:center}
.zoom{left:15px;top:612px;width:60px;height:110px}
.rot{left:1624px;top:0;width:42px;height:48px;display:grid;place-items:center;box-shadow:0 3px 7px rgba(0,0,0,.35)}
.pick{position:absolute;left:2975px;top:15px;width:300px;height:108px;background:#fff;border:1px solid #999;padding:14px 8px}
.pick .sel{height:30px;padding:0 7px 0 5px;font-size:17px}
.inp{height:33px;margin-top:17px;border:1px solid #666;border-radius:3px;padding:4px 5px;font:19.600px/23px Roboto,sans-serif;color:#757575}
.scroll{width:22px;background:#f1f1f1;display:flex;flex-direction:column}
.scroll i{height:1157px;background:#c1c1c1}
.scroll .dn{margin-top:auto}
footer{height:26px;background:#cfdbe3;color:#5c6f84;display:flex;align-items:center;font-size:15px;padding-left:1293px;flex:none}
footer .l{margin-left:auto;margin-right:22px;border-left:1px solid #9aabbb;padding-left:7px;line-height:20px;font-size:14.500px}
.desk{height:7px;flex:none;background:linear-gradient(90deg,#dadcb8 0,#d6d9c2 600px,#e4dfb4 830px,#d8dccf 980px,#e2d2cc 1190px,#ddd8c0 1300px,#d9d9bb 2400px,#d6d6c8);display:flex}
.win{width:515px;margin-left:72px;background:#fff;border:1px solid #bbb;border-top-width:2px}
.win2{width:66px;margin-left:602px;background:#f5eeec;border-right:1px solid #bbb}
.chat{position:absolute;left:3674px;top:1780px;width:90px;height:90px;border-radius:50%;background:#38536b;display:grid;place-items:center;box-shadow:10px 14px 14px rgba(0,0,0,.45)}
.q{font:bold 18px Roboto,sans-serif;fill:#fff;stroke:none;text-anchor:middle}
```
FILE: map.js
```js
// Map labels: [strip, text, x, y, class, dotX, dotY]; every strip has its own origin.
const origin = { A: 380, B: 1200, C: 2060, D: 2938 };
const px = (s, x) => origin[s] + x * 0.57398;
const py = y => 1140 + y * 0.51722;
const ns = 'http://www.w3.org/2000/svg';
const labels = document.getElementById('labels');

function el(parent, tag, attrs, text) {
  const e = document.createElementNS(ns, tag);
  for (const k in attrs) e.setAttribute(k, attrs[k]);
  if (text !== undefined) e.textContent = text;
  parent.appendChild(e);
  return e;
}

// Seeded generator, so that the street texture is the same on every load.
let seed = 7;
const rnd = () => ((seed = (seed * 16807) % 2147483647) / 2147483647);

const places = [
['A','y',40,228,'s'],['A','Madison',874,250,'m',874,280],['A','Milwaukee',1230,257,'b',1229,292],['A','Waukesha',1153,331,'s',1153,301],
['A','Janesville',965,392,'s',965,421],['A','Kenosha',1250,427,'s',1250,455],['A','Waterloo',175,461,'s',175,489],['A','Dubuque',573,457,'s',572,484],
['A','Rockford',947,539,'m',947,569],['A','Cedar Rapids',336,641,'m',336,672],['A','Chicago',1296,672,'b',1295,708],['A','Naperville',1171,723,'m',1171,753],
['A','Iowa City',367,756,'s',367,785],['A','Joliet',1188,804,'s',1188,832],['A','Davenport',595,862,'s',595,832],['A','Peoria',829,1094,'m',830,1124],
['A','Bloomington',970,1168,'s',970,1196],['A','Lafayette',1475,1192,'s',1475,1220],['A','ILLINOIS',852,1296,'st'],['A','Champaign',1149,1296,'s',1150,1324],
['A','Quincy',396,1361,'s',396,1386],['A','Springfield',815,1409,'m',815,1438],['A','Decatur',980,1390,'s',980,1418],
['B','Muskegon',196,194,'s',196,222],['B','Saginaw',741,126,'s',741,154],['B','Grand Rapids',334,289,'m',334,319],['B','Holland',228,354,'s',228,383],['B','Flint',804,273,'s',804,301],
['B','Sarnia',1163,316,'s',1109,314],['B','London',1386,282,'m',1386,311],['B','Lansing',598,374,'m',598,403],['B','Detroit',958,512,'b',957,546],
['B','Ann Arbor',791,534,'m',791,564],['B','Dearborn',927,580,'s',926,549],['B','Kalamazoo',352,532,'s',352,560],['B','Battle Creek',545,550,'s',450,549],
['B','Toledo',840,757,'m',840,788],['B','Elkhart',263,749,'s',262,777],['B','South Bend',105,779,'s',195,778],['B','Sandusky',1038,832,'s',1037,857],
['B','Cleveland',1279,806,'b',1279,841],['B','Fort Wayne',459,959,'m',459,989],['B','Akron',1320,958,'m',1320,988],['B','Findlay',813,975,'s',813,1000],
['B','Youngstown',1530,1012,'s',1527,982],['B','Canton',1355,1059,'s',1354,1088],['B','Lima',705,1078,'s',705,1107],['B','Muncie',401,1270,'s',401,1298],
['B','INDIANA',220,1296,'st'],['B','OHIO',1017,1260,'st'],['B','Columbus',968,1342,'b',969,1378],['B','Springfield',776,1362,'s',776,1390],
['B','Dayton',685,1417,'m',684,1447],['B','Zanesville',1284,1386,'s',1203,1385],['B','Indianapolis',217,1409,'b',216,1444],
['C','Mississauga',268,134,'b'],['C','Hamilton',215,250,'b',215,213],['C','Niagara Falls',402,305,'m',401,274],['C','Buffalo',517,347,'m',450,346],
['C','Rochester',753,220,'m',753,250],['C','Syracuse',1101,259,'m',1100,289],['C','NEW YORK',1136,343,'st'],['C','Ithaca',1015,481,'s',1015,506],
['C','Erie',164,588,'m',164,618],['C','Binghamton',1155,601,'s',1155,630],['C','Allegheny',420,778,'pk'],['C','National Forest',420,819,'pk'],
['C','Scranton',1216,845,'s',1215,873],['C','PENNSYLVANIA',732,1069,'st'],['C','Pittsburgh',184,1177,'b',184,1213],['C','Allentown',1261,1126,'m',1261,1156],
['C','Harrisburg',924,1242,'s',924,1270],['C','Lancaster',1063,1323,'s',1062,1351],['C','Philadelphia',1333,1344,'b',1334,1381],['C','York',962,1406,'s',961,1376],
['C','Wilmington',1243,1421,'m',1242,1451],['C','NEW JERSEY',1440,1516,'st'],
['D','NEW',652,147,'st'],['D','HAMPSHIRE',653,189,'st'],['D','Green',319,256,'pk'],['D','Mountain',319,296,'pk'],['D','National Forest',319,337,'pk'],
['D','Manchester',686,279,'s',686,308],['D','Albany',139,401,'m',139,430],['D','MASSACHUSETTS',597,479,'st'],['D','Worcester',604,541,'m',604,571],
['D','Boston',782,574,'b',780,537],['D','Springfield',417,598,'m',416,628],['D','Hartford',397,717,'m',397,747],['D','Providence',696,697,'m',697,727],
['D','CONNECTICUT',406,802,'st'],['D','RHODE',721,833,'st'],['D','ISLAND',721,879,'st'],['D','New Haven',336,879,'m',336,909],
['D','New York',82,1081,'b',80,1116],['D','Long Island',287,1091,'s']
];

// Interstate shields: strip, number, x, y
const shields = `A 94 1010 276|A 43 1096 405|A 380 272 563|A 88 917 715|A 39 967 748|A 80 235 773|A 80 640 808|A 294 1273 790|A 90 1351 802|A 80 980 888|A 57 1255 888|A 65 1377 933|A 55 1104 978|A 39 955 1052|A 74 733 1069|A 55 1028 1123|A 72 1079 1338|A 74 1295 1328|A 72 710 1455|A 94 1120 128|A 65 1517 1516|B 96 462 352|B 69 947 308|B 75 848 395|B 96 687 430|B 69 526 486|B 94 302 587|B 275 878 624|B 90 619 804|B 90 1535 700|B 75 821 882|B 90 930 872|B 480 1218 878|B 76 1402 981|B 75 778 1043|B 71 1069 1152|B 70 1460 1339|B 70 1153 1383|B 70 598 1421|B 71 807 1507|C 390 732 338|C 88 1487 431|C 81 1114 475|C 90 368 485|C 86 363 621|C 86 903 618|C 81 1196 678|C 79 140 820|C 84 1424 896|C 80 118 952|C 380 1257 940|C 80 534 984|C 80 874 998|C 80 1140 998|C 476 1201 989|C 80 1389 1042|C 99 611 1120|C 78 1517 1131|C 476 1263 1201|C 95 1504 1227|C 76 1095 1280|C 195 1513 1311|C 81 791 1336|C 76 407 1361|C 76 528 1350|C 68 433 1484|C 68 555 1478|D 93 717 360|D 95 803 416|D 90 190 517|D 495 693 633|D 84 497 690|D 195 825 785|D 95 301 936|D 95 915 128`;

// Secondary roads on a loose grid, bent between the crossings
let light = '', dark = '';
const gx = 47, gy = 44, cols = 72, rows = 18, node = [];
for (let r = 0; r < rows; r++) {
  node.push([]);
  for (let c = 0; c < cols; c++) {
    const wild = c > 34 ? 1.1 : 0.5;
    node[r].push([390 + c * gx + (rnd() - .5) * gx * wild, 1195 + r * gy + (rnd() - .5) * gy * wild]);
  }
}
function seg(a, b, bend) {
  let d = `M${a[0].toFixed(1)} ${a[1].toFixed(1)}L`;
  for (const t of [.25, .5, .75]) {
    const x = a[0] + (b[0] - a[0]) * t + (rnd() - .5) * bend, y = a[1] + (b[1] - a[1]) * t + (rnd() - .5) * bend;
    d += `${x.toFixed(1)} ${y.toFixed(1)} `;
  }
  d += `${b[0].toFixed(1)} ${b[1].toFixed(1)}`;
  if (rnd() < .5) light += d; else dark += d;
}
for (let r = 0; r < rows; r++) for (let c = 0; c < cols; c++) {
  const bend = c > 34 ? 11 : 4;
  if (c + 1 < cols && rnd() < .62) seg(node[r][c], node[r][c + 1], bend);
  if (r + 1 < rows && rnd() < .66) seg(node[r][c], node[r + 1][c], bend);
}
// Denser streets that radiate from the large cities
for (const [x, y, n, len] of [[1120,1505,22,90],[1750,1420,14,60],[1325,1888,12,60],[1757,1853,14,60],[1935,1575,14,60],[2165,1767,16,70],[2826,1854,18,80],[2980,1715,22,80],[3386,1418,16,70],[1086,1290,12,50],[3338,1516,8,45],[3166,1526,8,45],[1959,1651,10,50],[1683,1550,10,50]]) {
  for (let i = 0; i < n; i++) {
    const a = rnd() * 6.28, q = len * (.5 + rnd() * .6), s = rnd() * 18;
    seg([x + Math.cos(a + 1) * s, y + Math.sin(a + 1) * s], [x + Math.cos(a) * q, y + Math.sin(a) * q], 8);
  }
}
const minor = document.getElementById('minor');
el(minor, 'path', { d: light, fill: 'none', stroke: '#fbe2a0', 'stroke-width': 1.9 });
el(minor, 'path', { d: dark, fill: 'none', stroke: '#f9ce69', 'stroke-width': 2 });

// Clearings and darker woods in the forest areas
let clear = '', wood = '', grove = '';
function shard(x, y, s) {
  let d = 'M';
  const t = rnd() * 6.28, n = 5 + Math.floor(rnd() * 4);
  for (let i = 0; i < n; i++) {
    const a = t + (i + rnd() * .7) * 6.28 / n, q = s * (.25 + rnd() * 1.2);
    const ux = Math.cos(a) * q * 1.25, uy = Math.sin(a) * q * .75;
    d += `${(x + ux + uy * .3).toFixed(0)} ${(y + uy - ux * .35).toFixed(0)} `;
  }
  return d + 'Z';
}
for (let i = 0; i < 620; i++) {
  const x = 2060 + rnd() * 860, y = 1211 + rnd() * 707;
  const core = x > 2200 && x < 2560 && y > 1480 && y < 1670;
  const catskill = x > 2740 && y < 1640;
  if (!core && !(catskill && rnd() < .75)) clear += shard(x, y, 6 + rnd() * rnd() * 22);
}
for (let i = 0; i < 100; i++) clear += shard(2900 + rnd() * 480, 1211 + rnd() * 480, 5 + rnd() * 9);
for (let i = 0; i < 60; i++) clear += shard(1850 + rnd() * 230, 1740 + rnd() * 178, 8);
for (let i = 0; i < 70; i++) clear += shard(2085 + rnd() * 100, 1510 + rnd() * 250, 14);
for (let i = 0; i < 30; i++) clear += shard(2560 + rnd() * 280, 1770 + rnd() * 148, 24);
for (let i = 0; i < 60; i++) wood += shard(2230 + rnd() * 350, 1480 + rnd() * 180, 20);
for (let i = 0; i < 25; i++) wood += shard(2780 + rnd() * 150, 1420 + rnd() * 180, 16);
for (let i = 0; i < 60; i++) grove += shard(2330 + rnd() * 400, 1290 + rnd() * 180, 8);
for (let i = 0; i < 60; i++) grove += shard(1900 + rnd() * 200, 1520 + rnd() * 380, 7);
const specks = document.getElementById('specks');
el(specks, 'path', { d: wood, fill: '#c6e8c6', opacity: .7 });
el(specks, 'path', { d: clear, fill: '#f5f5f4' });
el(specks, 'path', { d: grove, fill: '#ceeacb' });

// Lighter core on the highways
document.querySelectorAll('#major path').forEach(p => {
  const core = p.cloneNode();
  core.setAttribute('class', 'in');
  p.parentNode.appendChild(core);
});

for (const s of shields.split('|')) {
  const [t, n, u, v] = s.split(' ');
  const x = px(t, +u), y = py(+v), w = n.length > 2 ? 15 : 11.5;
  el(labels, 'path', { d: `M${x - w + 2} ${y - 12}l3 2 ${w - 5} -2 ${w - 5} 2 3 -2 2 5H${x - w}Z`, fill: '#d9605b' });
  el(labels, 'path', { d: `M${x - w} ${y - 6}H${x + w}C${x + w + 1} ${y + 6} ${x + w / 2} ${y + 10} ${x} ${y + 13}C${x - w / 2} ${y + 10} ${x - w - 1} ${y + 6} ${x - w} ${y - 6}Z`, fill: '#3a78c8' });
  el(labels, 'text', { x, y: y + 1.5, class: 'n' }, n);
}
for (const [t, n, u, v] of [['B','401',1492,280],['B','401',1202,517],['C','403',81,253],['C','24',97,307]]) {
  const x = px(t, u), y = py(v), w = n.length > 2 ? 15 : 11;
  el(labels, 'path', { d: `M${x - w} ${y - 11}H${x + w}V${y + 6}L${x} ${y + 12}L${x - w} ${y + 6}Z`, fill: '#fff', stroke: '#777', 'stroke-width': 1.5 });
  el(labels, 'text', { x, y, class: 'n2' }, n);
}
for (const [t, name, u, v, k, du, dv] of places) {
  if (du) el(labels, 'circle', { cx: px(t, du), cy: py(dv), r: k === 'b' ? 4.8 : 4, fill: '#fff', stroke: '#333', 'stroke-width': k === 'b' ? 2 : 1.7 });
  el(labels, 'text', { x: px(t, u), y: py(v), class: k }, name);
}
const lx = px('B', 1395), ly = py(607);
el(labels, 'text', { x: lx, y: ly, class: 'lk', transform: `rotate(-24 ${lx} ${ly})` }, 'Lake Erie');
```
